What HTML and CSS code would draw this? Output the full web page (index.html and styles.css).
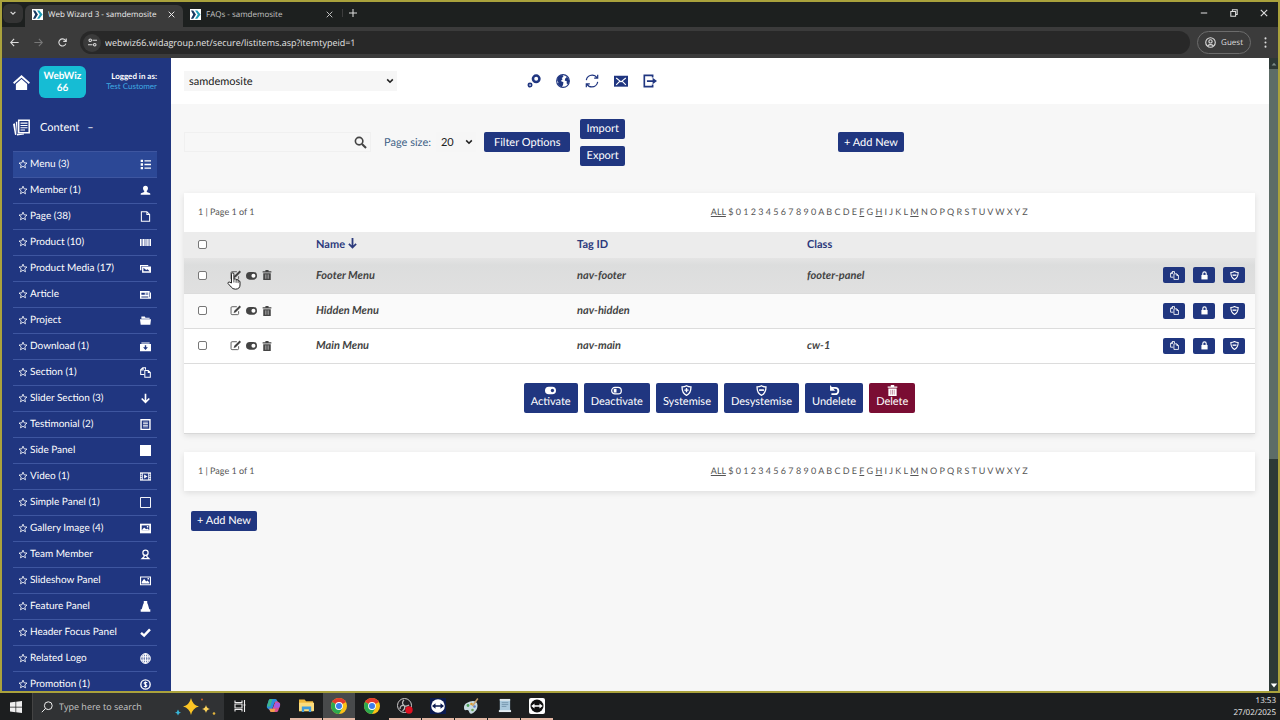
FILE: index.html
```html
<!DOCTYPE html>
<html lang="en">
<head>
    <meta charset="UTF-8">
    <meta name="viewport" content="width=device-width, initial-scale=1.0">
    <title>Web Wizard 3 - samdemosite</title>
    <link rel="stylesheet" href="styles.css">
</head>
<body>
    <!-- Icon set -->
    <svg class="icon-defs" aria-hidden="true">
        <symbol id="i-star" viewBox="0 0 16 16"><path d="M8 1.8l1.8 4.3 4.6.4-3.5 3 1.1 4.6L8 11.6 4 14.1l1.1-4.6-3.5-3 4.6-.4z" fill="none" stroke="currentColor" stroke-width="1.3"/></symbol>
        <symbol id="i-list" viewBox="0 0 16 16"><path d="M1 1h3.4v3.4H1zM1 6.3h3.4v3.4H1zM1 11.6h3.4V15H1zM6.5 1.8H16v2H6.5zM6.5 7H16v2H6.5zM6.5 12.2H16v2H6.5z"/></symbol>
        <symbol id="i-user" viewBox="0 0 16 16"><path d="M8 1c2.4 0 3.6 1.6 3.6 3.7 0 1.700-.7 3-1.700 3.800v1.700l4.600 1.800c.5.3.5 1 .5 2H1c0-1 0-1.700.5-2l4.600-1.800V8.500c-1-.8-1.700-2.100-1.700-3.800C4.400 2.600 5.600 1 8 1z"/></symbol>
        <symbol id="i-page" viewBox="0 0 16 16"><path d="M2 1h8l4 4v10H2zM10 1v4h4" fill="none" stroke="currentColor" stroke-width="1.500"/></symbol>
        <symbol id="i-barcode" viewBox="0 0 16 16"><path d="M0 3h2v10H0zM2.600 3h1v10h-1zM4.300 3h2.400v10H4.300zM7.500 3h1v10h-1zM9.200 3h2.200v10H9.200zM12 3h1v10h-1zM13.700 3H16v10h-2.300z"/></symbol>
        <symbol id="i-media" viewBox="0 0 16 16"><path d="M0 3h12v1.500H2v6H0zM3 5h13v9H3z"/><path d="M5 12V7l4 3 2-1 3 3z" fill="#203680"/></symbol>
        <symbol id="i-article" viewBox="0 0 16 16"><path d="M0 3h14v2h2v9H0z"/><path d="M2 5.500h5v3H2zM8 5.500h4v1H8zM8 7.500h4v1H8zM2 10h10v.8H2zM2 12h10v.6H2zM13.500 5h.8v7h-.8z" fill="#203680"/></symbol>
        <symbol id="i-folder" viewBox="0 0 16 16"><path d="M2 2h5l1 2h6v1.500H2zM0 6h16l-1 8H1z"/></symbol>
        <symbol id="i-download" viewBox="0 0 16 16"><path d="M2 2h12v1.600H2zM0 4.500h16V15H0z"/><path d="M7 6h2v3h2.500L8 13 4.500 9H7z" fill="#203680"/></symbol>
        <symbol id="i-copy" viewBox="0 0 16 16"><path d="M6 11H1V4l3-3h4v3M1 4.500h3.500V1M7 5h5l3 3v7H7zM12 5v3h3" fill="none" stroke="currentColor" stroke-width="1.500"/></symbol>
        <symbol id="i-down" viewBox="0 0 16 16"><path d="M8 1v12M2.500 8L8 13.500 13.500 8" fill="none" stroke="currentColor" stroke-width="2.400"/></symbol>
        <symbol id="i-note" viewBox="0 0 16 16"><path d="M1.500 1h13v14h-13z" fill="none" stroke="currentColor" stroke-width="2"/><path d="M4.500 4h7v1.200h-7zM4.500 6.300h7v1.200h-7zM4.500 8.600h7v1.200h-7zM4.500 10.900h7v1.200h-7z"/></symbol>
        <symbol id="i-square" viewBox="0 0 16 16"><path d="M0 0h16v16H0z"/></symbol>
        <symbol id="i-box" viewBox="0 0 16 16"><path d="M.7.7h14.600v14.600H.7z" fill="none" stroke="currentColor" stroke-width="1.400"/></symbol>
        <symbol id="i-video" viewBox="0 0 16 16"><path d="M0 2h16v12H0z"/><path d="M1 4h1.500v2H1zM1 7h1.500v2H1zM1 10h1.500v2H1zM13.500 4H15v2h-1.500zM13.500 7H15v2h-1.500zM13.500 10H15v2h-1.500zM4 3.500h8v9H4z" fill="#203680"/><path d="M6 5l5 3-5 3z"/></symbol>
        <symbol id="i-gallery" viewBox="0 0 16 16"><path d="M0 1h16v14H0z"/><path d="M2.500 3.500h11v7h-11z" fill="#203680"/><path d="M2.500 10.500l3.500-4 3 2.500 2-1 2.500 2.500zM10 4.500h2v2h-2zM3 12h10v1H3z"/></symbol>
        <symbol id="i-team" viewBox="0 0 16 16"><circle cx="8" cy="5.500" r="3.800" fill="none" stroke="currentColor" stroke-width="1.800"/><path d="M6 8.500v2.700L3 14h10l-3-2.800V8.500" fill="none" stroke="currentColor" stroke-width="1.800"/></symbol>
        <symbol id="i-image" viewBox="0 0 16 16"><path d="M.8 2.800h14.400v11.400H.8z" fill="none" stroke="currentColor" stroke-width="1.600"/><path d="M2.500 12.500V10L6 5.500l3 4 2-1.500 2.500 3v1.500zM11 4.500h2v2h-2z"/></symbol>
        <symbol id="i-feature" viewBox="0 0 16 16"><path d="M5.500 0h5v3l1 2 2 7H15v3.500H1V12h1.500l2-7 1-2z"/></symbol>
        <symbol id="i-check" viewBox="0 0 16 16"><path d="M1.500 8.500L6 12.500 14.500 3.500" fill="none" stroke="currentColor" stroke-width="3.600"/></symbol>
        <symbol id="i-globe" viewBox="0 0 16 16"><circle cx="8" cy="8" r="7.500" fill-opacity=".35"/><g fill="none" stroke="currentColor" stroke-width="1.400"><circle cx="8" cy="8" r="7"/><ellipse cx="8" cy="8" rx="3.400" ry="7"/><path d="M8 1v14M1.500 5.500h13M1.500 10.500h13"/></g></symbol>
        <symbol id="i-promo" viewBox="0 0 16 16"><circle cx="8" cy="8" r="6.800" fill="none" stroke="currentColor" stroke-width="2"/><path d="M10.500 5.500C8.500 4 5.800 5 6 6.500c.3 1.800 4 1.200 4 3.200 0 1.600-2.800 2-4.500.6M8 3.500v9" fill="none" stroke="currentColor" stroke-width="1.500"/></symbol>
        <symbol id="i-home" viewBox="0 0 18 16"><path d="M9 0l9 8-1.200 1.500L9 2.800 1.200 9.500 0 8zM9 4.300l6 5.200V16H3V9.500z"/></symbol>
        <symbol id="i-content" viewBox="0 0 17 16"><path d="M5.700.8h10.500v12.400H5.700z" fill="none" stroke="currentColor" stroke-width="1.500"/><path d="M7.500 3h7v1.300h-7zM7.500 5.500h7v1h-7zM7.500 7.700h7v1h-7zM7.500 10h4.500v1H7.500zM2.800 2.300H4.300v12.200l6.700-.5v1L4 16zM0 4.500l2-.8 1.300 11.500-1.300.4z"/></symbol>
        <symbol id="i-search" viewBox="0 0 16 16"><circle cx="6.300" cy="6.300" r="4.600" fill="none" stroke="currentColor" stroke-width="2"/><path d="M9.800 9.800l5 5" stroke="currentColor" stroke-width="2.500"/></symbol>
        <symbol id="i-cogs" viewBox="0 0 16 16"><g fill="none" stroke="currentColor"><circle cx="10.500" cy="5.500" r="3.700" stroke-width="2.900"/><circle cx="3.500" cy="12.700" r="1.900" stroke-width="1.900"/></g></symbol>
        <symbol id="i-earth" viewBox="0 0 16 16"><circle cx="8" cy="8" r="7.300" fill="none" stroke="currentColor" stroke-width="1.200"/><path d="M1.500 5C3 2 5 1 7.500 1l1 2-2 1.500 1 1.500-2 2 3 1.500-.5 3L6.500 15C3.500 14 2 12 1.500 10l1.500.5L1.200 7zM11 2l3 2.500L15.300 8 14 12l-2-1.500.5-2-2.500-1 .5-2.500 1.500-1z"/></symbol>
        <symbol id="i-refresh" viewBox="0 0 16 16"><path d="M1.500 7C2 3.500 5 1.200 8.200 1.200c2.400 0 4.300 1.200 5.400 3M14.500 9c-.5 3.500-3.500 5.800-6.700 5.800-2.400 0-4.300-1.200-5.400-3M14.500.8v4h-4M1.500 15.200v-4h4" fill="none" stroke="currentColor" stroke-width="1.400"/></symbol>
        <symbol id="i-mail" viewBox="0 0 16 16"><path d="M0 2h16v12.500H0z"/><path d="M2.500 4.500L8 9l5.500-4.500M2.500 12.500L6.500 8.500M13.500 12.500l-4-4" fill="none" stroke="#fff" stroke-width="1.300"/></symbol>
        <symbol id="i-logout" viewBox="0 0 16 16"><path d="M11 4V1.500H1.500v13H11V12" fill="none" stroke="currentColor" stroke-width="1.900"/><path d="M4.500 7h6.500V4.200L16 8l-5 3.800V9H4.500z"/></symbol>
        <symbol id="i-edit" viewBox="0 0 16 16"><path d="M10 2.500H3Q1.500 2.500 1.500 4v8.500Q1.500 14 3 14h8q1.500 0 1.500-1.500V9" fill="none" stroke="currentColor" stroke-width="1.200"/><path d="M14 .8L16 3l-7.500 7.500-3.200 1 1-3.200z"/></symbol>
        <symbol id="i-toggle" viewBox="0 0 16 16"><rect x="0" y="3" width="16" height="11" rx="5.500"/><circle cx="10.800" cy="8.500" r="2.900" fill="#fff"/></symbol>
        <symbol id="i-toggle-on" viewBox="0 0 16 16"><rect x="0" y="2.500" width="16" height="11" rx="5.500"/><circle cx="10.800" cy="8" r="2.400" fill="#203680"/></symbol>
        <symbol id="i-toggle-off" viewBox="0 0 16 16"><rect x="1" y="3.500" width="14" height="9.500" rx="4.700" fill="none" stroke="currentColor" stroke-width="1.800"/><path d="M4 5.500h4v5.500H4z"/></symbol>
        <symbol id="i-bin" viewBox="0 0 16 16"><path d="M5.500 0h5v2H15v2H1V2h4.500zM2 5h12v11H2z"/><path d="M5.500 7v7M8 7v7M10.500 7v7" stroke="#fff" stroke-opacity=".55" stroke-width="1.200"/></symbol>
        <symbol id="i-bin-light" viewBox="0 0 16 16"><path d="M5.500 0h5v2H15v2H1V2h4.500zM2 5h12v11H2z"/><path d="M5.500 7v7M8 7v7M10.500 7v7" stroke="#7a0d33" stroke-opacity=".5" stroke-width="1.200"/></symbol>
        <symbol id="i-lock" viewBox="0 0 16 16"><path d="M2.500 7h11v8h-11z"/><path d="M5 7.500V4.500Q5 1.500 8 1.500t3 3v3" fill="none" stroke="currentColor" stroke-width="2"/></symbol>
        <symbol id="i-shield-minus" viewBox="0 0 16 16"><path d="M8 1q3 1.800 6.500 1.800 0 9-6.500 12.200Q1.500 11.800 1.500 2.800 5 2.800 8 1z" fill="none" stroke="currentColor" stroke-width="1.900"/><path d="M4.500 6.200h7v2.400h-7z"/></symbol>
        <symbol id="i-shield-plus" viewBox="0 0 16 16"><path d="M8 1q3 1.800 6.500 1.800 0 9-6.500 12.200Q1.500 11.800 1.500 2.800 5 2.800 8 1z" fill="none" stroke="currentColor" stroke-width="1.900"/><path d="M7 4.500h2v2h2v2H9v2H7v-2H5v-2h2z"/></symbol>
        <symbol id="i-undo" viewBox="0 0 16 16"><path d="M3 4.200h6a4.600 4.600 0 0 1 0 9.200H3.500" fill="none" stroke="currentColor" stroke-width="2.600"/><path d="M1.500 0v8.500H9z"/></symbol>
        <symbol id="i-arrows" viewBox="0 0 12 12"><path d="M0 0h12v12H0z" fill="#fff"/><path d="M1 1.500h2.500L6.500 6l-3 4.500H1L3.500 6z" fill="#173a63"/><path d="M5.500 1.500H8L11.500 6 8 10.500H5.500L8.500 6z" fill="#1d9bb5"/></symbol>
        <symbol id="i-x" viewBox="0 0 10 10"><path d="M1 1l8 8M9 1L1 9" stroke="currentColor" stroke-width="1.400"/></symbol>
        <symbol id="i-chrome" viewBox="0 0 16 16"><circle cx="8" cy="8" r="8" fill="#fbc116"/><path d="M8 8L1.100 4A8 8 0 0 1 14.900 4z" fill="#e33b2e"/><path d="M8 8L1.100 4A8 8 0 0 0 8 16l3.500-6z" fill="#2da94f"/><circle cx="8" cy="8" r="3.900" fill="#fff"/><circle cx="8" cy="8" r="3" fill="#3b7ded"/></symbol>
    </svg>

    <div class="browser">
        <!-- Tab strip -->
        <div class="tab-strip">
            <button class="tab-search" aria-label="Search tabs"><svg class="ic-8" viewBox="0 0 10 10"><path d="M2 3.500l3 3 3-3" fill="none" stroke="currentColor" stroke-width="1.500"/></svg></button>
            <div class="tab active">
                <svg class="favicon"><use href="#i-arrows"/></svg>
                <span class="tab-title">Web Wizard 3 - samdemosite</span>
                <button aria-label="Close tab"><svg class="ic-7"><use href="#i-x"/></svg></button>
            </div>
            <div class="tab">
                <svg class="favicon"><use href="#i-arrows"/></svg>
                <span class="tab-title">FAQs - samdemosite</span>
                <button aria-label="Close tab"><svg class="ic-7"><use href="#i-x"/></svg></button>
            </div>
            <button class="new-tab" aria-label="New tab"><svg class="ic-8" viewBox="0 0 10 10"><path d="M5 0v10M0 5h10" stroke="currentColor" stroke-width="1.300"/></svg></button>
            <div class="window-buttons">
                <button aria-label="Minimise"><svg class="ic-8" viewBox="0 0 10 10"><path d="M1 5h8" stroke="currentColor" stroke-width="1.300"/></svg></button>
                <button aria-label="Restore"><svg class="ic-8" viewBox="0 0 10 10"><path d="M1 3h6v6H1zM3 3V1h6v6H7" fill="none" stroke="currentColor" stroke-width="1.300"/></svg></button>
                <button aria-label="Close"><svg class="ic-8"><use href="#i-x"/></svg></button>
            </div>
        </div>

        <!-- Address bar -->
        <div class="address-bar">
            <button aria-label="Back"><svg class="ic-9" viewBox="0 0 12 12"><path d="M11.500 6H1M5.500 1.200L.9 6l4.600 4.800" fill="none" stroke="currentColor" stroke-width="1.500"/></svg></button>
            <button class="dim" aria-label="Forward"><svg class="ic-9" viewBox="0 0 12 12"><path d="M.5 6H11M6.500 1.200L11.100 6l-4.600 4.800" fill="none" stroke="currentColor" stroke-width="1.500"/></svg></button>
            <button aria-label="Reload"><svg class="ic-9" viewBox="0 0 12 12"><path d="M10.500 7.500A4.800 4.800 0 1 1 9.800 3L11 4.200M11 .5v4H7" fill="none" stroke="currentColor" stroke-width="1.500"/></svg></button>
            <div class="url-box">
                <button class="site-info" aria-label="Site information"><svg class="ic-9" viewBox="0 0 12 12"><g fill="none" stroke="currentColor" stroke-width="1.400"><circle cx="3" cy="3" r="1.700"/><circle cx="9" cy="9" r="1.700"/><path d="M6 3h6M0 9h6"/></g></svg></button>
                <input type="text" class="url" aria-label="Address" value="webwiz66.widagroup.net/secure/listitems.asp?itemtypeid=1">
            </div>
            <button class="guest"><svg class="ic-11" viewBox="0 0 12 12"><g fill="none" stroke="currentColor" stroke-width="1.200"><circle cx="6" cy="6" r="5.200"/><circle cx="6" cy="4.800" r="1.800"/><path d="M2.800 9.500q3.200-2.500 6.400 0"/></g></svg>Guest</button>
            <button class="more" aria-label="More"><svg class="ic-11" viewBox="0 0 12 12"><circle cx="6" cy="1.500" r="1.100"/><circle cx="6" cy="6" r="1.100"/><circle cx="6" cy="10.500" r="1.100"/></svg></button>
        </div>

        <div class="page">
            <!-- Sidebar -->
            <aside class="sidebar">
                <div class="side-top">
                    <a href="#" aria-label="Home"><svg class="home"><use href="#i-home"/></svg></a>
                    <div class="brand">WebWiz 66</div>
                    <div class="login">Logged in as:<a href="#">Test Customer</a></div>
                </div>
                <a href="#" class="side-heading"><svg class="ic-17"><use href="#i-content"/></svg>Content<span>–</span></a>
                <ul class="side-menu">
                    <li class="active"><a href="#"><svg class="ic-10"><use href="#i-star"/></svg>Menu (3)<svg class="kind"><use href="#i-list"/></svg></a></li>
                    <li><a href="#"><svg class="ic-10"><use href="#i-star"/></svg>Member (1)<svg class="kind"><use href="#i-user"/></svg></a></li>
                    <li><a href="#"><svg class="ic-10"><use href="#i-star"/></svg>Page (38)<svg class="kind"><use href="#i-page"/></svg></a></li>
                    <li><a href="#"><svg class="ic-10"><use href="#i-star"/></svg>Product (10)<svg class="kind"><use href="#i-barcode"/></svg></a></li>
                    <li><a href="#"><svg class="ic-10"><use href="#i-star"/></svg>Product Media (17)<svg class="kind"><use href="#i-media"/></svg></a></li>
                    <li><a href="#"><svg class="ic-10"><use href="#i-star"/></svg>Article<svg class="kind"><use href="#i-article"/></svg></a></li>
                    <li><a href="#"><svg class="ic-10"><use href="#i-star"/></svg>Project<svg class="kind"><use href="#i-folder"/></svg></a></li>
                    <li><a href="#"><svg class="ic-10"><use href="#i-star"/></svg>Download (1)<svg class="kind"><use href="#i-download"/></svg></a></li>
                    <li><a href="#"><svg class="ic-10"><use href="#i-star"/></svg>Section (1)<svg class="kind"><use href="#i-copy"/></svg></a></li>
                    <li><a href="#"><svg class="ic-10"><use href="#i-star"/></svg>Slider Section (3)<svg class="kind"><use href="#i-down"/></svg></a></li>
                    <li><a href="#"><svg class="ic-10"><use href="#i-star"/></svg>Testimonial (2)<svg class="kind"><use href="#i-note"/></svg></a></li>
                    <li><a href="#"><svg class="ic-10"><use href="#i-star"/></svg>Side Panel<svg class="kind"><use href="#i-square"/></svg></a></li>
                    <li><a href="#"><svg class="ic-10"><use href="#i-star"/></svg>Video (1)<svg class="kind"><use href="#i-video"/></svg></a></li>
                    <li><a href="#"><svg class="ic-10"><use href="#i-star"/></svg>Simple Panel (1)<svg class="kind"><use href="#i-box"/></svg></a></li>
                    <li><a href="#"><svg class="ic-10"><use href="#i-star"/></svg>Gallery Image (4)<svg class="kind"><use href="#i-gallery"/></svg></a></li>
                    <li><a href="#"><svg class="ic-10"><use href="#i-star"/></svg>Team Member<svg class="kind"><use href="#i-team"/></svg></a></li>
                    <li><a href="#"><svg class="ic-10"><use href="#i-star"/></svg>Slideshow Panel<svg class="kind"><use href="#i-image"/></svg></a></li>
                    <li><a href="#"><svg class="ic-10"><use href="#i-star"/></svg>Feature Panel<svg class="kind"><use href="#i-feature"/></svg></a></li>
                    <li><a href="#"><svg class="ic-10"><use href="#i-star"/></svg>Header Focus Panel<svg class="kind"><use href="#i-check"/></svg></a></li>
                    <li><a href="#"><svg class="ic-10"><use href="#i-star"/></svg>Related Logo<svg class="kind"><use href="#i-globe"/></svg></a></li>
                    <li><a href="#"><svg class="ic-10"><use href="#i-star"/></svg>Promotion (1)<svg class="kind"><use href="#i-promo"/></svg></a></li>
                </ul>
            </aside>

            <main class="main">
                <header class="topbar">
                    <div class="select-wrap site">
                        <select aria-label="Site"><option>samdemosite</option></select>
                        <svg class="ic-8" viewBox="0 0 10 10"><path d="M1.500 3l3.500 3.500L8.500 3" fill="none" stroke="currentColor" stroke-width="2"/></svg>
                    </div>
                    <nav class="top-icons">
                        <a href="#" aria-label="Settings"><svg class="ic-14"><use href="#i-cogs"/></svg></a>
                        <a href="#" aria-label="View site"><svg class="ic-14"><use href="#i-earth"/></svg></a>
                        <a href="#" aria-label="Refresh"><svg class="ic-14"><use href="#i-refresh"/></svg></a>
                        <a href="#" aria-label="Mail"><svg class="ic-14"><use href="#i-mail"/></svg></a>
                        <a href="#" aria-label="Log out"><svg class="ic-14"><use href="#i-logout"/></svg></a>
                    </nav>
                </header>

                <section class="filters">
                    <div class="filter-left">
                        <div class="search">
                            <input type="text" aria-label="Search items">
                            <button aria-label="Search"><svg class="ic-13"><use href="#i-search"/></svg></button>
                        </div>
                        <label for="pageSize">Page size:</label>
                        <div class="select-wrap size">
                            <select id="pageSize"><option>20</option></select>
                            <svg class="ic-8" viewBox="0 0 10 10"><path d="M1.500 3l3.500 3.500L8.500 3" fill="none" stroke="currentColor" stroke-width="2"/></svg>
                        </div>
                        <button class="btn wide">Filter Options</button>
                        <div class="stack">
                            <button class="btn">Import</button>
                            <button class="btn">Export</button>
                        </div>
                    </div>
                    <button class="btn">+ Add New</button>
                </section>

                <section class="panel">
                    <div class="pager">
                        <span>1 | Page 1 of 1</span>
                        <div class="letters"><a href="#">ALL</a> $ 0 1 2 3 4 5 6 7 8 9 0 A B C D E <a href="#">F</a> G <a href="#">H</a> I J K L <a href="#">M</a> N O P Q R S T U V W X Y Z</div>
                    </div>
                    <table class="items">
                        <thead>
                            <tr>
                                <th class="c-check"><input type="checkbox" aria-label="Select all"></th>
                                <th class="c-tools"></th>
                                <th class="c-name">Name <svg class="sort" viewBox="0 0 10 12"><path d="M5 0v10M1 6.500l4 4 4-4" fill="none" stroke="currentColor" stroke-width="2"/></svg></th>
                                <th class="c-tag">Tag ID</th>
                                <th>Class</th>
                                <th class="c-actions"></th>
                            </tr>
                        </thead>
                        <tbody>
                            <tr class="hovered">
                                <td><input type="checkbox" aria-label="Select Footer Menu"></td>
                                <td>
                                    <div class="tools">
                                        <button aria-label="Edit"><svg class="ic-11"><use href="#i-edit"/></svg>
                                            <svg class="pointer" viewBox="0 0 14 18"><path d="M4.500 11V2.200q0-1.400 1.200-1.400T6.900 2.200V7q2-.8 2.200.8 1.800-.6 2 .9 1.900-.3 1.900 1.300v3q0 4-4.600 4.200-2.800 0-4.200-2.200L1 11.500q-.3-1.400 1.200-1.500z" fill="#fff" stroke="#222" stroke-width="1"/><path d="M6.900 7v3.500M9.100 8v2.800M11.100 8.700v2.400" stroke="#222" stroke-width=".8"/></svg>
                                        </button>
                                        <button aria-label="Toggle"><svg class="ic-11"><use href="#i-toggle"/></svg></button>
                                        <button aria-label="Delete"><svg class="ic-10"><use href="#i-bin"/></svg></button>
                                    </div>
                                </td>
                                <td>Footer Menu</td>
                                <td>nav-footer</td>
                                <td>footer-panel</td>
                                <td>
                                    <div class="actions">
                                        <button aria-label="Copy"><svg class="ic-9"><use href="#i-copy"/></svg></button>
                                        <button aria-label="Lock"><svg class="ic-9"><use href="#i-lock"/></svg></button>
                                        <button aria-label="Protect"><svg class="ic-9"><use href="#i-shield-minus"/></svg></button>
                                    </div>
                                </td>
                            </tr>
                            <tr class="odd">
                                <td><input type="checkbox" aria-label="Select Hidden Menu"></td>
                                <td>
                                    <div class="tools">
                                        <button aria-label="Edit"><svg class="ic-11"><use href="#i-edit"/></svg></button>
                                        <button aria-label="Toggle"><svg class="ic-11"><use href="#i-toggle"/></svg></button>
                                        <button aria-label="Delete"><svg class="ic-10"><use href="#i-bin"/></svg></button>
                                    </div>
                                </td>
                                <td>Hidden Menu</td>
                                <td>nav-hidden</td>
                                <td></td>
                                <td>
                                    <div class="actions">
                                        <button aria-label="Copy"><svg class="ic-9"><use href="#i-copy"/></svg></button>
                                        <button aria-label="Lock"><svg class="ic-9"><use href="#i-lock"/></svg></button>
                                        <button aria-label="Protect"><svg class="ic-9"><use href="#i-shield-minus"/></svg></button>
                                    </div>
                                </td>
                            </tr>
                            <tr>
                                <td><input type="checkbox" aria-label="Select Main Menu"></td>
                                <td>
                                    <div class="tools">
                                        <button aria-label="Edit"><svg class="ic-11"><use href="#i-edit"/></svg></button>
                                        <button aria-label="Toggle"><svg class="ic-11"><use href="#i-toggle"/></svg></button>
                                        <button aria-label="Delete"><svg class="ic-10"><use href="#i-bin"/></svg></button>
                                    </div>
                                </td>
                                <td>Main Menu</td>
                                <td>nav-main</td>
                                <td>cw-1</td>
                                <td>
                                    <div class="actions">
                                        <button aria-label="Copy"><svg class="ic-9"><use href="#i-copy"/></svg></button>
                                        <button aria-label="Lock"><svg class="ic-9"><use href="#i-lock"/></svg></button>
                                        <button aria-label="Protect"><svg class="ic-9"><use href="#i-shield-minus"/></svg></button>
                                    </div>
                                </td>
                            </tr>
                        </tbody>
                    </table>
                    <div class="bulk">
                        <button class="btn"><svg class="ic-11"><use href="#i-toggle-on"/></svg>Activate</button>
                        <button class="btn"><svg class="ic-11"><use href="#i-toggle-off"/></svg>Deactivate</button>
                        <button class="btn"><svg class="ic-11"><use href="#i-shield-plus"/></svg>Systemise</button>
                        <button class="btn"><svg class="ic-11"><use href="#i-shield-minus"/></svg>Desystemise</button>
                        <button class="btn"><svg class="ic-11"><use href="#i-undo"/></svg>Undelete</button>
                        <button class="btn danger"><svg class="ic-11"><use href="#i-bin-light"/></svg>Delete</button>
                    </div>
                </section>

                <section class="panel bottom">
                    <div class="pager">
                        <span>1 | Page 1 of 1</span>
                        <div class="letters"><a href="#">ALL</a> $ 0 1 2 3 4 5 6 7 8 9 0 A B C D E <a href="#">F</a> G <a href="#">H</a> I J K L <a href="#">M</a> N O P Q R S T U V W X Y Z</div>
                    </div>
                </section>
                <div class="footer-add"><button class="btn">+ Add New</button></div>
            </main>

            <div class="scrollbar">
                <svg class="ic-8" viewBox="0 0 10 10"><path d="M2 7h6L5 3.500z"/></svg>
                <div class="thumb"></div>
                <svg class="ic-8 last" viewBox="0 0 10 10"><path d="M1 3h8L5 8z"/></svg>
            </div>
        </div>
    </div>

    <!-- Taskbar -->
    <footer class="taskbar">
        <button class="start" aria-label="Start"><svg class="ic-12" viewBox="0 0 12 12"><path d="M0 1.600l5.500-.8v4.900H0zM6.200.7L12 0v5.700H6.200zM0 6.400h5.500v4.900L0 10.500zM6.200 6.400H12V12l-5.800-.7z"/></svg></button>
        <div class="task-search">
            <svg class="ic-12" viewBox="0 0 12 12"><path d="M.8 11.200L4.500 7.500" stroke="currentColor"/><circle cx="7.300" cy="4.700" r="3.900" fill="none" stroke="currentColor"/></svg>
            <input type="text" aria-label="Search" placeholder="Type here to search">
            <svg class="sparkles" viewBox="0 0 42 18"><path d="M16 0q1.500 7 8 8.500Q17.500 10 16 17q-1.500-7-8-8.500Q14.500 7 16 0z" fill="#fcc524"/><path d="M31 7q.7 3.300 4 4-3.300.7-4 4-.7-3.300-4-4 3.300-.7 4-4z" fill="#fbd259"/><path d="M3 11.500q.5 2.500 3 3-2.500.5-3 3-.5-2.500-3-3 2.500-.5 3-3z" fill="#38b6d8"/><circle cx="27" cy="1.500" r="1" fill="#d0642b"/><circle cx="39" cy="15.500" r="1.300" fill="#e3b53c"/></svg>
        </div>
        <div class="apps">
            <button aria-label="Task view"><svg class="ic-12" viewBox="0 0 12 12"><path d="M1 .5v2h7v-2M1 11.500v-2h7v2M1 4h7v4H1zM10.500 0v12M9.500 5h2" fill="none" stroke="currentColor" stroke-width="1.100"/></svg></button>
            <button aria-label="Copilot"><svg class="ic-15" viewBox="0 0 16 16"><path d="M5 1h5q1.500 0 2 2l.5 2H9L6.500 12Q6 14 4 13L1.500 11Q.5 10 1 8l2-5.500Q3.500 1 5 1z" fill="#2b8fe0"/><path d="M5 1h2L4.500 9 1 9l2-6.500Q3.500 1 5 1z" fill="#3fb68b"/><path d="M11 15H6q-1.500 0-2-2l-.5-1.500H7L9.500 4.500Q10 3 12 3.500l2.500 1.500q1 1 .5 3l-2 5.500Q12.500 15 11 15z" fill="#d9508f"/><path d="M10 5h3.500q2 .5 1.500 3l-1 2.500H8z" fill="#a55be0"/><path d="M6 15q-1.500 0-2-2l-.5-1.500H10L9 15z" fill="#f0a04a"/></svg></button>
            <button class="open" aria-label="File Explorer"><svg class="ic-15" viewBox="0 0 16 16"><path d="M0 1.500h6l1.500 2H15V14H0z" fill="#f0b83a"/><path d="M0 5h16v9H0z" fill="#fbdc7c"/><path d="M3 9h10v6h-2.500v-3h-5v3H3z" fill="#3e9bdd"/></svg></button>
            <button class="open current" aria-label="Chrome"><svg class="ic-16"><use href="#i-chrome"/></svg></button>
            <button aria-label="Chrome"><svg class="ic-16"><use href="#i-chrome"/></svg></button>
            <button class="open" aria-label="OBS"><svg class="ic-16" viewBox="0 0 16 16"><circle cx="7.500" cy="7.500" r="7" fill="#201f22" stroke="#ccc" stroke-width="1"/><path d="M7 2q-3 3 0 5.500Q9 9 12 7M7 7.500Q3 7 3 11M7.500 8q1 3-2 5" fill="none" stroke="#bbb" stroke-width="1.300"/><circle cx="12" cy="12" r="3.700" fill="#e01020"/></svg></button>
            <button class="open" aria-label="TeamViewer Meeting"><svg class="ic-16" viewBox="0 0 16 16"><path d="M0 0h16v16H0z" fill="#0b1b50"/><circle cx="8" cy="8" r="6.800" fill="#fff"/><path d="M2 8l3.500-2.700v1.900h5V5.300L14 8l-3.500 2.700V8.800h-5v1.900z" fill="#0b1b50"/></svg></button>
            <button class="open" aria-label="Paint"><svg class="ic-16" viewBox="0 0 16 16"><path d="M7 3.500c4-1.500 7.500 0 7.500 4S12 14 9 15.500 6.500 12 4.500 12 1 13 1 9.500 4 4.600 7 3.500z" fill="#c8dce2"/><circle cx="5" cy="7.500" r="1.400" fill="#4da25a"/><circle cx="8.500" cy="6" r="1.300" fill="#d89c34"/><circle cx="11.500" cy="8.500" r="1.300" fill="#5b7dc8"/><circle cx="9.500" cy="12" r="1.300" fill="#6aa05a"/><path d="M14.800.5L9.500 8" stroke="#c9a16d" stroke-width="1.500"/></svg></button>
            <button class="open" aria-label="Notepad"><svg class="ic-15" viewBox="0 0 16 16"><path d="M3 1h11v11l1 3H2l1-3z" fill="#a9c8dc"/><path d="M3 1h11v2H3z" fill="#dde6ea"/><path d="M5 5h7M5 7h7M5 9h5" stroke="#6b8ca4" stroke-width=".8"/><path d="M2 13h13v2H2z" fill="#e6eef2"/></svg></button>
            <button class="open" aria-label="TeamViewer"><svg class="ic-16" viewBox="0 0 16 16"><rect width="16" height="16" rx="2" fill="#fff"/><circle cx="8" cy="8" r="6.500" fill="#111"/><path d="M2.300 8l3.200-2.500v1.700h5V5.500L13.700 8l-3.200 2.500V8.800h-5v1.700z" fill="#fff"/></svg></button>
        </div>
        <div class="clock"><span>13:53</span><span>27/02/2025</span></div>
    </footer>
</body>
</html>
```
FILE: styles.css
```css
* {
    box-sizing: border-box;
}
body {
    margin: 0;
    height: 100vh;
    display: flex;
    flex-direction: column;
    overflow: hidden;
    font-family: Lato, sans-serif;
    font-size: 11px;
    text-rendering: geometricPrecision;
    background: #1c1e1f;
}
button,
input,
select {
    font: inherit;
    color: inherit;
    text-rendering: inherit;
    border: none;
    background: none;
    padding: 0;
    margin: 0;
}
button {
    cursor: pointer;
}
a {
    color: inherit;
    text-decoration: none;
}
svg {
    fill: currentColor;
    display: block;
    flex: none;
}
.icon-defs {
    position: absolute;
    width: 0;
    height: 0;
}
.ic-7 { width: 7px; height: 7px; }
.ic-8 { width: 8px; height: 8px; }
.ic-9 { width: 9px; height: 9px; }
.ic-10 { width: 10px; height: 10px; }
.ic-11 { width: 11px; height: 11px; }
.ic-12 { width: 12px; height: 12px; }
.ic-13 { width: 13px; height: 13px; }
.ic-14 { width: 14px; height: 14px; }
.ic-15 { width: 15px; height: 15px; }
.ic-16 { width: 16px; height: 16px; }
.ic-17 { width: 17px; height: 17px; }

/* Browser window */
.browser {
    flex: 1;
    min-height: 0;
    display: flex;
    flex-direction: column;
    border: 2px solid #aaa23c;
}
.tab-strip {
    height: 25px;
    padding-bottom: 3px;
    display: flex;
    align-items: center;
    background: #1d201f;
    color: #ddd;
    font-family: "Open Sans", sans-serif;
    font-size: 8px;
}
.tab-search {
    width: 20px;
    height: 19px;
    margin: 0 2px 0 1px;
    display: grid;
    place-items: center;
    border-radius: 6px;
    background: #343434;
}
.tab {
    height: 22px;
    width: 158px;
    margin-bottom: -3px;
    padding: 0 8px 4px 7px;
    display: flex;
    align-items: center;
    align-self: flex-end;
    gap: 5px;
    color: #c4c4c4;
}
.tab.active {
    background: #3b3b3b;
    color: #eee;
    border-radius: 6px 6px 0 0;
}
.tab-title {
    flex: 1;
    white-space: nowrap;
    overflow: hidden;
}
.favicon {
    width: 11px;
    height: 11px;
}
.new-tab {
    margin-left: 1px;
    padding-left: 6px;
    border-left: 1px solid #3d3d3d;
}
.window-buttons {
    margin-left: auto;
    padding-right: 10px;
    display: flex;
    gap: 22px;
}
.address-bar {
    height: 31px;
    padding: 0 8px 0 8px;
    display: flex;
    align-items: center;
    gap: 15px;
    background: #3b3b3b;
    color: #ddd;
    font-family: "Open Sans", sans-serif;
    font-size: 8px;
}
.address-bar .dim {
    color: #777;
}
.url-box {
    flex: 1;
    height: 23px;
    margin: 0 -8px 0 -2px;
    padding: 0 3px;
    display: flex;
    align-items: center;
    gap: 4px;
    border-radius: 12px;
    background: #282828;
}
.site-info {
    width: 18px;
    height: 18px;
    display: grid;
    place-items: center;
    border-radius: 9px;
    background: #3a3a3a;
}
.url {
    flex: 1;
    font-size: 9px;
    color: #e4e4e4;
}
.guest {
    height: 23px;
    padding: 0 7px;
    display: flex;
    align-items: center;
    gap: 5px;
    border: 1px solid #6c6c6c;
    border-radius: 12px;
}
.more {
    margin: 0 -1px 0 -6px;
}
.page {
    flex: 1;
    min-height: 0;
    display: flex;
}

/* Sidebar */
.sidebar {
    width: 169px;
    flex: none;
    overflow: hidden;
    padding: 0 14px 0 11px;
    background: #203680;
    color: #fff;
}
.side-top {
    padding-top: 8px;
    display: flex;
    align-items: center;
    gap: 9px;
}
.home {
    width: 17px;
    height: 15px;
}
.brand {
    width: 47px;
    height: 32px;
    display: flex;
    align-items: center;
    border-radius: 6px;
    background: #16bcd4;
    font-size: 10px;
    line-height: 12px;
    font-weight: bold;
    text-align: center;
}
.login {
    flex: 1;
    align-self: flex-start;
    padding-top: 5px;
    font-size: 8px;
    line-height: 10px;
    font-weight: bold;
    text-align: right;
    white-space: nowrap;
}
.login a {
    display: block;
    font-weight: normal;
    color: #3fa9e0;
}
.side-heading {
    height: 53px;
    padding-top: 6px;
    display: flex;
    align-items: center;
    gap: 8px;
}
.side-heading svg {
    margin-right: 2px;
}
.side-menu {
    list-style: none;
    margin: 0;
    padding: 0;
    font-size: 10px;
}
.side-menu li {
    height: 26px;
    border-top: 1px solid #3e56a0;
}
.side-menu li.active {
    background: #2c4896;
}
.side-menu a {
    height: 100%;
    padding: 0 6px 1px 5px;
    display: flex;
    align-items: center;
    gap: 2px;
}
.side-menu .kind {
    width: 11px;
    height: 11px;
    margin-left: auto;
}

/* Main column */
.main {
    flex: 1;
    min-width: 0;
    background: #f7f7f7;
    color: #333;
}
.topbar {
    height: 46px;
    padding: 0 13px;
    display: flex;
    align-items: center;
    background: #fff;
}
.select-wrap {
    position: relative;
    height: 20px;
    color: #222;
}
.select-wrap select {
    width: 100%;
    height: 100%;
    padding: 0 5px;
    appearance: none;
    background: #f6f6f6;
}
.select-wrap svg {
    position: absolute;
    right: 3px;
    top: 6px;
    pointer-events: none;
}
.site {
    width: 213px;
}
.top-icons {
    margin-left: 130px;
    display: flex;
    gap: 15px;
    color: #203680;
}
.filters {
    height: 77px;
    padding: 0 13px 1px;
    display: flex;
    align-items: center;
}
.filter-left {
    width: 61%;
    display: flex;
    align-items: center;
}
.search {
    width: 187px;
    height: 20px;
    margin-right: 13px;
    display: flex;
    align-items: center;
    border: 1px solid #f0f0f0;
    color: #444;
}
.search input {
    flex: 1;
    min-width: 0;
    height: 100%;
    padding: 0 5px;
}
.search button {
    padding: 0 3px;
}
.filters label {
    color: #3f6387;
}
.size {
    width: 40px;
    margin: 0 8px 0 5px;
}
.btn {
    height: 20px;
    padding: 0 6px;
    border-radius: 2px;
    background: #203680;
    color: #fff;
    white-space: nowrap;
}
.btn.wide {
    padding: 0 10px;
}
.btn.danger {
    background: #7a0d33;
}
.stack {
    margin-left: 10px;
    display: grid;
    gap: 7px;
}
.panel {
    margin: 12px 14px 0 13px;
    background: #fff;
    border-bottom: 1px solid #d8d8d8;
    box-shadow: 0 2px 6px rgba(0, 0, 0, 0.1);
}
.panel.bottom {
    margin-top: 18px;
    border: none;
}
.pager {
    height: 39px;
    padding: 0 0 2px 14px;
    display: flex;
    align-items: center;
    font-size: 9px;
    color: #555;
}
.pager span {
    width: 27%;
}
.letters {
    flex: 1;
    text-align: center;
}
.letters a {
    text-decoration: underline;
}
.items {
    width: 100%;
    table-layout: fixed;
    border-collapse: collapse;
    font-style: italic;
    font-weight: bold;
    color: #444;
}
.items th {
    height: 26px;
    padding: 0 0 2px;
    background: #ececec;
    color: #2c3a7c;
    font-style: normal;
    text-align: left;
}
.items td {
    height: 35px;
    padding: 0;
    border-bottom: 1px solid #dcdcdc;
}
.items .odd {
    background: #fafafa;
}
.items .hovered {
    background: linear-gradient(#e4e4e4, #dcdddd 20%, #e0e0e0);
}
.items input {
    width: 9px;
    height: 9px;
    margin: 0 0 0 14px;
    display: block;
    appearance: none;
    border: 1px solid #777;
    border-radius: 2px;
    background: #fff;
}
.c-check {
    width: 46px;
}
.c-tools {
    width: 86px;
}
.c-name {
    width: 261px;
}
.c-tag {
    width: 230px;
}
.c-actions {
    width: 100px;
}
.sort {
    width: 9px;
    height: 11px;
    display: inline-block;
    vertical-align: -1px;
}
.tools {
    display: flex;
    align-items: center;
    gap: 5px;
}
.tools button {
    position: relative;
}
.pointer {
    position: absolute;
    left: -3px;
    top: 2px;
    width: 14px;
    height: 18px;
}
.actions {
    padding-right: 10px;
    display: flex;
    justify-content: flex-end;
    gap: 8px;
}
.actions button {
    width: 22px;
    height: 16px;
    display: grid;
    place-items: center;
    border-radius: 2px;
    background: #203680;
    color: #fff;
}
.bulk {
    height: 69px;
    padding-top: 19px;
    display: flex;
    justify-content: center;
    gap: 6px;
}
.bulk .btn {
    height: 30px;
    padding: 0 7px 2px;
    display: flex;
    flex-direction: column;
    align-items: center;
    justify-content: center;
    line-height: 12px;
}
.footer-add {
    padding: 20px;
}
.scrollbar {
    width: 9px;
    padding: 2px 0;
    display: flex;
    flex-direction: column;
    align-items: center;
    gap: 1px;
    background: #2d3936;
    color: #7d8c87;
}
.scrollbar .thumb {
    width: 9px;
    height: 62%;
    background: #5d6c67;
}
.scrollbar .last {
    margin-top: auto;
    color: #fff;
}

/* Taskbar */
.taskbar {
    height: 27px;
    display: flex;
    background: #1c1e1f;
    color: #eee;
    font-family: "Open Sans", sans-serif;
}
.start {
    width: 32px;
    display: grid;
    place-items: center;
}
.task-search {
    width: 192px;
    padding: 0 7px 0 8px;
    display: flex;
    align-items: center;
    gap: 6px;
    background: #303234;
    border-left: 1px solid #444;
}
.task-search input {
    flex: 1;
    min-width: 0;
    font-size: 9px;
}
.task-search input::placeholder {
    color: #c4c4c4;
}
.sparkles {
    width: 42px;
    height: 18px;
}
.apps {
    display: flex;
    gap: 1px;
}
.apps button {
    width: 32px;
    display: grid;
    place-items: center;
    border-bottom: 2px solid transparent;
}
.apps .open {
    border-bottom-color: #e3b7a4;
}
.apps .current {
    background: #484a4b;
}
.clock {
    margin-left: auto;
    padding-right: 4px;
    display: flex;
    flex-direction: column;
    justify-content: center;
    align-items: flex-end;
    font-size: 8px;
    line-height: 12px;
}
```
